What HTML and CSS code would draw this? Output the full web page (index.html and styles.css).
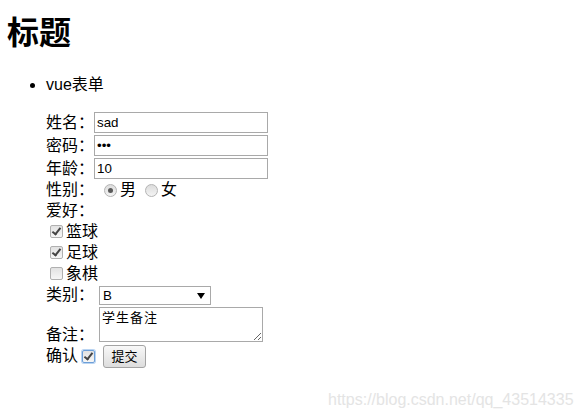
FILE: index.html
```html
<!DOCTYPE html>
<html lang="zh">
<head>
<meta charset="utf-8">
<title>vue表单</title>
<link rel="stylesheet" href="styles.css">
</head>
<body>
<h1 class="title">标题</h1>
<ul class="list">
  <li class="item">vue表单
    <form class="form">
      <div class="row row-input"><span class="lbl">姓名：</span><input class="text" type="text" value="sad"></div>
      <div class="row row-input"><span class="lbl">密码：</span><input class="text" type="password" value="abc"></div>
      <div class="row row-input"><span class="lbl">年龄：</span><input class="text" type="text" value="10"></div>
      <div class="row row-sex"><span class="lbl">性别：</span><input class="radio radio-first" type="radio" name="sex" checked><span>男</span><input class="radio" type="radio" name="sex"><span>女</span></div>
      <div class="row row-plain"><span class="lbl">爱好：</span></div>
      <div class="row row-plain row-cb"><input class="cb" type="checkbox" checked><span>篮球</span></div>
      <div class="row row-plain row-cb"><input class="cb" type="checkbox" checked><span>足球</span></div>
      <div class="row row-plain row-cb"><input class="cb" type="checkbox"><span>象棋</span></div>
      <div class="row row-select"><span class="lbl">类别：</span><span class="select-wrap"><select class="select"><option>A</option><option selected>B</option><option>C</option></select><svg class="arrow" width="8" height="6" viewBox="0 0 8 6"><polygon points="0,0 8,0 4,6" fill="#000"/></svg></span></div>
      <div class="row row-area"><span class="lbl">备注：</span><textarea class="area">学生备注</textarea></div>
      <div class="row row-confirm"><span class="lbl">确认</span><input class="cb cb-focus" type="checkbox" checked><button class="btn" type="button">提交</button></div>
    </form>
  </li>
</ul>
<div class="watermark">https://blog.csdn.net/qq_43514335</div>
</body>
</html>
```
FILE: styles.css
```css
html, body {
  margin: 0;
  background: #fff;
}
body {
  padding: 13px 8px 0 7px;
  font-family: "Liberation Sans", "Noto Sans CJK SC", sans-serif;
  font-size: 16px;
  color: #000;
  height: 418px;
  box-sizing: border-box;
  position: relative;
  overflow: hidden;
}
.title {
  margin: 0;
  font-size: 32px;
  line-height: 40px;
  font-weight: bold;
}
.list {
  margin: 21px 0 0;
  padding-left: 39px;
}
.item {
  line-height: 22px;
}
.form {
  margin-top: 15px;
  display: flex;
  flex-direction: column;
}
.row {
  display: flex;
  align-items: center;
  line-height: 16px;
}
.row-input { height: 23px; }
.row-sex { height: 20px; }
.row-plain { height: 21px; }
.row-cb { padding-left: 4px; }
.row-select { height: 22px; }
.row-area { height: 37px; align-items: flex-end; }
.row-confirm { height: 26px; }
.lbl { white-space: nowrap; }
.text {
  box-sizing: border-box;
  width: 174px;
  height: 21px;
  margin: 0;
  padding: 1px 2px;
  border: 1px solid #a9a9a9;
  font-family: "Liberation Sans", sans-serif;
  font-size: 13.33px;
  color: #000;
  outline: none;
}
.radio {
  appearance: none;
  -webkit-appearance: none;
  position: relative;
  box-sizing: border-box;
  width: 13px;
  height: 13px;
  margin: 0 3px 0 9px;
  border: 1px solid #b4b4b4;
  border-radius: 50%;
  background: linear-gradient(#dcdcdc, #f4f4f4);
}
.radio-first { margin-left: 10px; }
.radio:checked::after {
  content: "";
  position: absolute;
  left: 3px;
  top: 3px;
  width: 5px;
  height: 5px;
  border-radius: 50%;
  background: #5a5a5a;
}
.cb {
  appearance: none;
  -webkit-appearance: none;
  position: relative;
  box-sizing: border-box;
  width: 13px;
  height: 13px;
  margin: 0 3px 0 0;
  border: 1px solid #b0b0b0;
  border-radius: 2px;
  background: linear-gradient(#e2e2e2, #f6f6f6);
}
.cb:checked::after {
  content: "";
  position: absolute;
  left: 3px;
  top: 0px;
  width: 3px;
  height: 7px;
  border: solid #444;
  border-width: 0 2px 2px 0;
  transform: rotate(38deg);
}
.cb-focus {
  margin: 0 8px 0 4px;
  border-color: #6d9fd8;
  box-shadow: 0 0 0 1px #b9d4f2;
}
.select-wrap {
  position: relative;
  display: inline-block;
  margin-left: 5px;
  height: 19px;
}
.select {
  appearance: none;
  -webkit-appearance: none;
  box-sizing: border-box;
  width: 112px;
  height: 19px;
  margin: 0;
  padding: 0 0 0 3px;
  border: 1px solid #a9a9a9;
  border-radius: 0;
  background: #fff;
  font-family: "Liberation Sans", sans-serif;
  font-size: 13.33px;
  color: #000;
  outline: none;
}
.arrow {
  position: absolute;
  right: 6px;
  top: 7px;
}
.area {
  box-sizing: border-box;
  width: 164px;
  height: 35px;
  margin: 0 0 1px 5px;
  padding: 1px 2px;
  border: 1px solid #a9a9a9;
  font-family: "Noto Sans CJK SC", sans-serif;
  font-size: 13px;
  line-height: 15px;
  letter-spacing: 1px;
  color: #000;
  resize: both;
  outline: none;
}
.btn {
  box-sizing: border-box;
  width: 43px;
  height: 23px;
  margin: 0;
  padding: 0;
  border: 1px solid #a3a3a3;
  border-radius: 3px;
  background: linear-gradient(#f8f8f8, #dddddd);
  font-family: "Noto Sans CJK SC", sans-serif;
  font-size: 13px;
  line-height: 20px;
  color: #000;
}
.watermark {
  position: absolute;
  left: 328px;
  top: 391px;
  font-family: "Liberation Sans", sans-serif;
  font-size: 16px;
  line-height: 18px;
  color: #e4e4e4;
  white-space: nowrap;
}
```
